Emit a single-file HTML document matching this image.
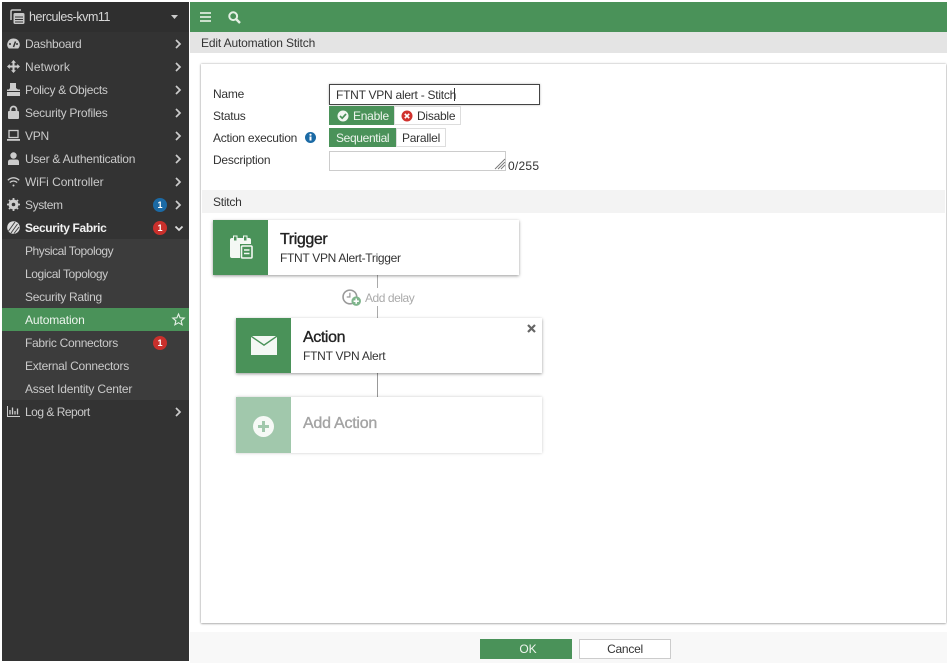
<!DOCTYPE html>
<html><head><meta charset="utf-8"><style>
*{box-sizing:border-box}
html,body{margin:0;padding:0;width:947px;height:663px;overflow:hidden;background:#fff;font-family:"Liberation Sans",sans-serif;font-size:12px;color:#333}
body{filter:blur(.3px)}
.a{position:absolute}
.t{position:absolute;white-space:nowrap;line-height:16px;letter-spacing:-.25px}
.m{color:#cacaca}
.h{font-size:16px;line-height:18px;letter-spacing:-.4px;-webkit-text-stroke:.35px currentColor}
svg{position:absolute;overflow:visible}
.b{position:absolute;width:14px;height:14px;border-radius:7px;background:#c9302c;color:#fff;font:bold 9px/14px "Liberation Sans",sans-serif;text-align:center}
.c{position:absolute;background:#fff;box-shadow:0 1px 3px rgba(0,0,0,.4)}
</style></head><body>
<div class="a" style="left:2px;top:2px;width:187px;height:659px;background:#333"></div>
<div class="a" style="left:2px;top:2px;width:187px;height:30px;background:#2f2f2f"></div>
<div class="a" style="left:2px;top:239px;width:187px;height:161px;background:#3c3c3c"></div>
<div class="a" style="left:2px;top:216px;width:187px;height:23px;background:#333"></div>
<div class="a" style="left:2px;top:308px;width:187px;height:23px;background:#4a9259"></div>

<svg style="left:10px;top:9px" width="16" height="16" viewBox="0 0 16 16" fill="none" stroke="#c8c8c8"><path d="M1 11V2.500Q1 1 2.500 1H11" stroke-width="1.500"/><rect x="3.500" y="4" width="11" height="11" rx="1.500" fill="#c8c8c8" stroke="none"/><path d="M5 8h8M5 10.500h8M5 13h8" stroke="#333"/></svg>
<div class="t" style="left:29px;top:9px;color:#d8d8d8;font-size:12.500px;letter-spacing:-.45px">hercules-kvm11</div>
<svg style="left:171px;top:15px" width="7" height="4"><path d="M0 0h7L3.500 4z" fill="#ccc"/></svg>

<svg style="left:7px;top:38px" width="13" height="12" viewBox="0 0 13 12"><path d="M6.500 0.500A6 6 0 0 0 1.800 10.500H11.200A6 6 0 0 0 6.500 .500Z" fill="#ccc"/><path d="M6.500 9L8.500 3.500" stroke="#333" stroke-width="1.500"/><circle cx="3" cy="6" r="1" fill="#333"/><circle cx="10" cy="6" r="1" fill="#333"/></svg>
<div class="t m" style="left:25px;top:36px">Dashboard</div>
<svg style="left:7px;top:60px" width="13" height="13" viewBox="0 0 13 13"><path d="M6.500 0L9 2.800H7.500V5.500H10.200V4L13 6.500 10.200 9V7.500H7.500V10.200H9L6.500 13 4 10.200H5.500V7.500H2.800V9L0 6.500 2.800 4V5.500H5.500V2.800H4Z" fill="#ccc"/></svg>
<div class="t m" style="left:25px;top:59px;letter-spacing:.15px">Network</div>
<svg style="left:7px;top:83px" width="13" height="13" viewBox="0 0 13 13"><path d="M3 0H9V5L11 6.500H13V13H0V6.500H2L3 5Z" fill="#ccc"/><path d="M0 8.500H13" stroke="#333"/></svg>
<div class="t m" style="left:25px;top:82px;letter-spacing:-.3px">Policy &amp; Objects</div>
<svg style="left:8px;top:106px" width="11" height="13" viewBox="0 0 11 13"><rect x="0" y="5" width="11" height="8" rx="1" fill="#ccc"/><path d="M2.500 5.500V3.500A3 3 0 0 1 8.500 3.500V5.500" fill="none" stroke="#ccc" stroke-width="1.700"/></svg>
<div class="t m" style="left:25px;top:105px">Security Profiles</div>
<svg style="left:7px;top:130px" width="13" height="11" viewBox="0 0 13 11"><rect x="2" y=".500" width="9" height="7" fill="none" stroke="#ccc" stroke-width="1.300"/><rect x="0" y="9" width="13" height="1.800" fill="#ccc"/></svg>
<div class="t m" style="left:25px;top:128px">VPN</div>
<svg style="left:7px;top:152px" width="13" height="13" viewBox="0 0 13 13"><circle cx="6.500" cy="3.500" r="3.200" fill="#ccc"/><path d="M1 13V10Q1 7.500 3.500 7.500H9.500Q12 7.500 12 10V13Z" fill="#ccc"/></svg>
<div class="t m" style="left:25px;top:151px">User &amp; Authentication</div>
<svg style="left:7px;top:177px" width="13" height="10" viewBox="0 0 13 10" fill="none" stroke="#ccc" stroke-width="1.300"><path d="M.800 3.200Q6.500-1.500 12.200 3.200M2.800 5.500Q6.500 2.500 10.200 5.500"/><circle cx="6.500" cy="8.500" r="1" fill="#ccc" stroke="none"/></svg>
<div class="t m" style="left:25px;top:174px;letter-spacing:-.05px">WiFi Controller</div>
<svg style="left:7px;top:198px" width="13" height="13" viewBox="0 0 13 13"><circle cx="6.500" cy="6.500" r="3.500" fill="none" stroke="#ccc" stroke-width="3"/><path d="M6.500 0V13M0 6.500H13M2 2L11 11M11 2L2 11" stroke="#ccc" stroke-width="1.800"/><circle cx="6.500" cy="6.500" r="1.800" fill="#333"/></svg>
<div class="t m" style="left:25px;top:197px;letter-spacing:-.4px">System</div>
<div class="b" style="left:153px;top:198px;background:#1b6aa5">1</div>

<svg style="left:7px;top:221px" width="13" height="13" viewBox="0 0 13 13"><circle cx="6.500" cy="6.500" r="6.300" fill="#ddd"/><path d="M1.500 10L8 1M4 12L10.500 3M7 12.500L12 6" stroke="#444" stroke-width="1"/></svg>
<div class="t" style="left:25px;top:220px;color:#f2f2f2;font-weight:bold;letter-spacing:-.35px">Security Fabric</div>
<div class="b" style="left:153px;top:221px">1</div>
<div class="t m" style="left:25px;top:243px;letter-spacing:-.45px">Physical Topology</div>
<div class="t m" style="left:25px;top:266px;letter-spacing:-.4px">Logical Topology</div>
<div class="t m" style="left:25px;top:289px;letter-spacing:-.3px">Security Rating</div>
<div class="t" style="left:25px;top:312px;color:#eef5ee;letter-spacing:-.1px">Automation</div>
<svg style="left:172px;top:313px" width="13" height="13" viewBox="0 0 13 13"><path d="M6.500 1L8.100 4.800 12.200 5.100 9.100 7.800 10.100 11.800 6.500 9.700 2.900 11.800 3.900 7.800 .800 5.100 4.900 4.800Z" fill="none" stroke="#e8f2e8" stroke-width="1.100"/></svg>
<div class="t m" style="left:25px;top:335px;letter-spacing:-.3px">Fabric Connectors</div>
<div class="b" style="left:153px;top:336px">1</div>
<div class="t m" style="left:25px;top:358px">External Connectors</div>
<div class="t m" style="left:25px;top:381px;letter-spacing:-.2px">Asset Identity Center</div>
<svg style="left:7px;top:406px" width="13" height="11" viewBox="0 0 13 11"><path d="M.500 0V10.500H13" fill="none" stroke="#ccc"/><path d="M3 8.500V4M5.500 8.500V1.500M8 8.500V5M10.500 8.500V2.500" stroke="#ccc" stroke-width="1.300"/></svg>
<div class="t m" style="left:25px;top:404px;letter-spacing:-.5px">Log &amp; Report</div>

<svg style="left:175px;top:40px" width="6" height="380" fill="none" stroke="#ccc" stroke-width="1.700"><path d="M1 0L5 4 1 8M1 23L5 27 1 31M1 46L5 50 1 54M1 69L5 73 1 77M1 92L5 96 1 100M1 115L5 119 1 123M1 138L5 142 1 146M1 161L5 165 1 169M1 368L5 372 1 376"/></svg>
<svg style="left:175px;top:226px" width="8" height="5" fill="none" stroke="#ddd" stroke-width="1.800"><path d="M.500 .500L4 4 7.500 .500"/></svg>

<div class="a" style="left:190px;top:2px;width:757px;height:30px;background:#4a9259"></div>
<svg style="left:200px;top:12px" width="11" height="10"><path d="M0 1H11M0 5H11M0 9H11" stroke="#dcecdc" stroke-width="1.800"/></svg>
<svg style="left:228px;top:11px" width="13" height="13" viewBox="0 0 13 13" fill="none" stroke="#e4f0e4" stroke-width="2"><circle cx="5.200" cy="5.200" r="3.900"/><path d="M8 8L12 12" stroke-width="2.400"/></svg>
<div class="a" style="left:190px;top:32px;width:757px;height:21px;background:#e4e4e4"></div>
<div class="t" style="left:201px;top:35px;color:#333;letter-spacing:-.15px">Edit Automation Stitch</div>

<div class="a" style="left:190px;top:53px;width:757px;height:579px;background:#fff"></div>
<div class="a" style="left:190px;top:632px;width:757px;height:31px;background:#f8f8f8"></div>
<div class="a" style="left:201px;top:64px;width:745px;height:559px;background:#fff;box-shadow:0 0 2px rgba(0,0,0,.35),0 1px 2px rgba(0,0,0,.2)"></div>

<div class="t" style="left:213px;top:86px">Name</div>
<div class="a" style="left:329px;top:84px;width:211px;height:21px;border:1px solid #444;box-shadow:0 0 2px rgba(0,0,0,.3);background:#fff"></div>
<div class="t" style="left:336px;top:87px;color:#333">FTNT VPN alert - Stitch</div>
<div class="a" style="left:454px;top:88px;width:1px;height:13px;background:#333"></div>
<div class="t" style="left:213px;top:108px">Status</div>
<div class="a" style="left:329px;top:106px;width:65px;height:19px;background:#4a9259"></div>
<svg style="left:337px;top:110px" width="12" height="12" viewBox="0 0 12 12"><circle cx="6" cy="6" r="5.500" fill="#f0f6f0"/><path d="M3 6L5.200 8.200 9 4" fill="none" stroke="#4a9259" stroke-width="1.700"/></svg>
<div class="t" style="left:353px;top:108px;color:#eef5ee">Enable</div>
<div class="a" style="left:394px;top:106px;width:67px;height:19px;border:1px solid #ddd;background:#fff"></div>
<svg style="left:401px;top:110px" width="12" height="12" viewBox="0 0 12 12"><circle cx="6" cy="6" r="5.500" fill="#d0312d"/><path d="M3.800 3.800L8.200 8.200M8.200 3.800L3.800 8.200" stroke="#fff" stroke-width="1.700"/></svg>
<div class="t" style="left:417px;top:108px">Disable</div>
<div class="t" style="left:213px;top:130px">Action execution</div>
<svg style="left:305px;top:132px" width="11" height="11" viewBox="0 0 11 11"><circle cx="5.500" cy="5.500" r="5.500" fill="#1b6aa5"/><path d="M5.500 4.500V8.500" stroke="#fff" stroke-width="2"/><circle cx="5.500" cy="2.700" r="1.100" fill="#fff"/></svg>
<div class="a" style="left:329px;top:128px;width:67px;height:19px;background:#4a9259"></div>
<div class="t" style="left:336px;top:130px;color:#eef5ee;letter-spacing:-.35px">Sequential</div>
<div class="a" style="left:396px;top:128px;width:50px;height:19px;border:1px solid #ddd;background:#fff"></div>
<div class="t" style="left:402px;top:130px">Parallel</div>
<div class="t" style="left:213px;top:152px">Description</div>
<div class="a" style="left:329px;top:151px;width:177px;height:20px;border:1px solid #ccc;background:#fff"></div>
<svg style="left:494px;top:158px" width="12" height="12"><path d="M1 11L11 1M4 11L11 4M7 11L11 7" stroke="#777" stroke-width=".9"/></svg>
<div class="t" style="left:508px;top:158px;letter-spacing:.25px">0/255</div>

<div class="a" style="left:202px;top:190px;width:743px;height:23px;background:#f3f3f3"></div>
<div class="t" style="left:213px;top:194px">Stitch</div>

<div class="a" style="left:377px;top:275px;width:1px;height:13px;background:#aaa"></div>
<div class="a" style="left:377px;top:306px;width:1px;height:12px;background:#aaa"></div>
<div class="a" style="left:377px;top:373px;width:1px;height:24px;background:#999"></div>

<div class="c" style="left:213px;top:220px;width:306px;height:55px"></div>
<div class="a" style="left:213px;top:220px;width:55px;height:55px;background:#4a9259"></div>
<svg style="left:229px;top:235px" width="24" height="25" viewBox="0 0 24 25"><path d="M1 5Q1 3 3 3H20Q22 3 22 5V9H11V23H3Q1 23 1 21Z" fill="#f4f8f4"/><rect x="4.500" y="1" width="3.500" height="5" fill="#4a9259" stroke="#f4f8f4"/><rect x="14.500" y="1" width="3.500" height="5" fill="#4a9259" stroke="#f4f8f4"/><rect x="12.500" y="11" width="10.500" height="12" rx="1" fill="none" stroke="#f4f8f4" stroke-width="1.600"/><path d="M15 15H20.500M15 18.500H20.500" stroke="#f4f8f4" stroke-width="1.500"/></svg>
<div class="t h" style="left:280px;top:231px;color:#222">Trigger</div>
<div class="t" style="left:280px;top:250px;color:#333;letter-spacing:-.3px">FTNT VPN Alert-Trigger</div>

<svg style="left:342px;top:289px" width="20" height="18" viewBox="0 0 19 17"><circle cx="7.500" cy="7.500" r="6.500" fill="#fff" stroke="#999" stroke-width="1.500"/><path d="M7.500 3.500V7.500H4.500" fill="none" stroke="#999" stroke-width="1.200"/><circle cx="13.500" cy="11.500" r="4.500" fill="#7fb58c"/><path d="M13.500 9V14M11 11.500H16" stroke="#fff" stroke-width="1.500"/></svg>
<div class="t" style="left:365px;top:290px;color:#aaa;letter-spacing:-.45px">Add delay</div>

<div class="c" style="left:236px;top:318px;width:306px;height:55px"></div>
<div class="a" style="left:236px;top:318px;width:55px;height:55px;background:#4a9259"></div>
<svg style="left:251px;top:336px" width="26" height="19" viewBox="0 0 26 19"><path d="M0 1L13 10 26 1V19H0Z" fill="#f4f8f4"/><path d="M1 0H25L13 8.300Z" fill="#f4f8f4"/></svg>
<div class="t h" style="left:303px;top:329px;color:#222">Action</div>
<div class="t" style="left:303px;top:348px;color:#333">FTNT VPN Alert</div>
<svg style="left:527px;top:324px" width="9" height="9"><path d="M1 1L8 8M8 1L1 8" stroke="#666" stroke-width="2.200"/></svg>

<div class="a" style="left:236px;top:397px;width:306px;height:56px;background:#fff;box-shadow:0 0 3px rgba(0,0,0,.22)"></div>
<div class="a" style="left:236px;top:397px;width:55px;height:56px;background:#a1c8ac"></div>
<svg style="left:253px;top:416px" width="21" height="21" viewBox="0 0 21 21"><circle cx="10.500" cy="10.500" r="10.500" fill="#f6f9f6"/><path d="M10.500 5V16M5 10.500H16" stroke="#a1c8ac" stroke-width="3"/></svg>
<div class="t h" style="left:303px;top:415px;color:#a3a3a3;letter-spacing:-.25px">Add Action</div>

<div class="a" style="left:480px;top:639px;width:92px;height:20px;background:#4a9259"></div>
<div class="t" style="left:482px;top:641px;width:92px;text-align:center;color:#eef5ee;letter-spacing:0">OK</div>
<div class="a" style="left:579px;top:639px;width:92px;height:20px;background:#fff;border:1px solid #ccc"></div>
<div class="t" style="left:579px;top:641px;width:92px;text-align:center">Cancel</div>
</body></html>
